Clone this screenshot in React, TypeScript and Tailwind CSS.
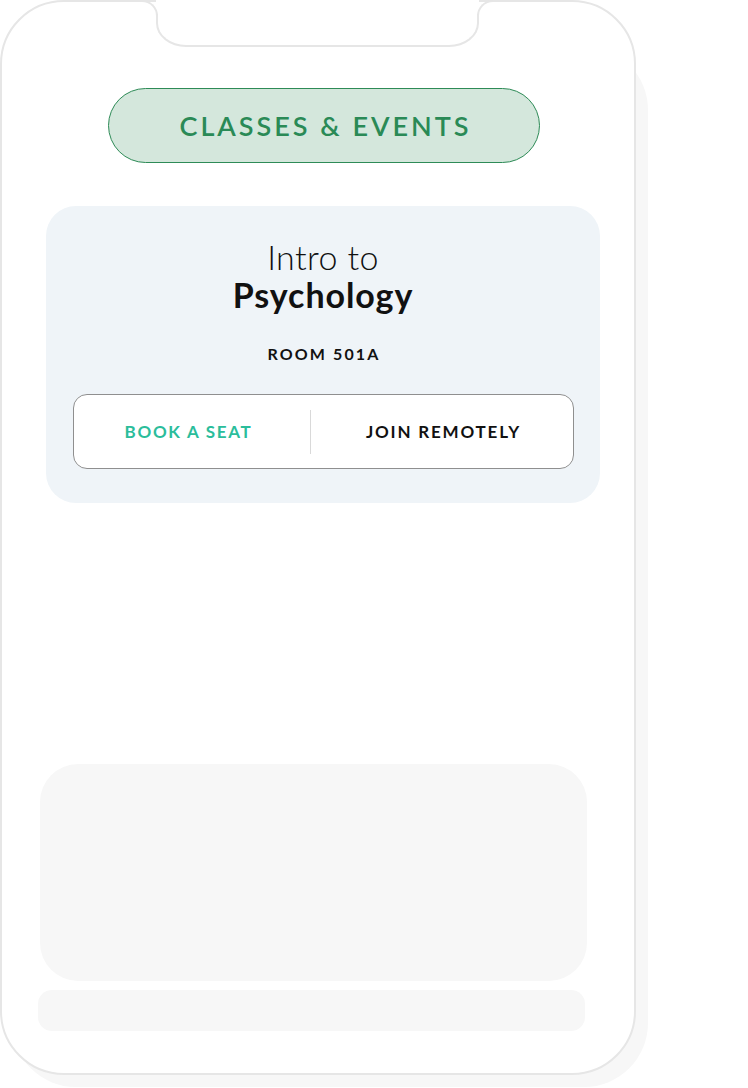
import React from "react";

export default function App() {
  return (
    <div className="w-[748px] h-[1088px] bg-white overflow-hidden" style={{ fontFamily: "Lato, 'Open Sans', sans-serif" }}>
      <div className="relative w-[636px] h-[1075px]">
        {/* backdrop shadow shape */}
        <div className="absolute left-[12px] top-[46px] w-[636px] h-[1041px] rounded-[64px] bg-[#f7f7f7]" />
        {/* phone frame */}
        <div className="relative w-[636px] h-[1075px] rounded-[64px] border-2 border-[#e6e6e6] bg-white flex flex-col">
          {/* notch */}
          <div className="absolute left-[154px] top-[-2px] w-[323px] h-[16px] bg-white" />
          <div className="absolute left-[154px] top-[12px] w-[323px] h-[33px] bg-white border-2 border-t-0 border-[#e6e6e6] rounded-bl-[30px_24px] rounded-br-[30px_24px]" />
          <div className="absolute left-[140px] top-[-2px] w-[16px] h-[16px] bg-white border-t-2 border-r-2 border-[#e6e6e6] rounded-tr-[16px]" />
          <div className="absolute left-[475px] top-[-2px] w-[16px] h-[16px] bg-white border-t-2 border-l-2 border-[#e6e6e6] rounded-tl-[16px]" />

          {/* pill */}
          <div className="mt-[86px] ml-[106px] w-[432px] h-[75px] rounded-full border border-[#2e8b57] bg-[#d4e7dc] flex items-center justify-center">
            <span className="text-[27px] leading-none font-semibold tracking-[3px] pl-[3px] text-[#2a8a56]">CLASSES &amp; EVENTS</span>
          </div>

          {/* class card */}
          <div className="mt-[43px] ml-[44px] w-[554px] h-[297px] rounded-[30px] bg-[#eff4f8] flex flex-col items-center pt-[32px]">
            <div className="text-[34px] leading-[38px] font-light text-[#111] tracking-[0.4px]">Intro to</div>
            <div className="text-[34px] leading-[38px] font-bold text-[#111] tracking-[0.9px]">Psychology</div>
            <div className="mt-[30px] text-[16px] leading-[20px] font-bold tracking-[2.1px] pl-[2px] text-[#111]">ROOM 501A</div>
            <div className="mt-[30px] w-[501px] h-[75px] border border-[#8f8f8f] rounded-[14px] bg-white flex items-center">
              <div className="w-[236px] flex justify-center pr-[6px]">
                <span className="text-[17px] font-bold tracking-[1.7px] text-[#2bbd9b]">BOOK A SEAT</span>
              </div>
              <div className="w-px h-[44px] bg-[#d9d9d9]" />
              <div className="flex-1 flex justify-center pl-[4px]">
                <span className="text-[17px] font-bold tracking-[1.8px] text-[#111]">JOIN REMOTELY</span>
              </div>
            </div>
          </div>

          {/* placeholder cards */}
          <div className="mt-[261px] ml-[38px] w-[547px] h-[217px] rounded-[38px] bg-[#f7f7f7]" />
          <div className="mt-[9px] ml-[36px] w-[547px] h-[41px] rounded-[14px] bg-[#f7f7f7]" />
        </div>
      </div>
    </div>
  );
}
